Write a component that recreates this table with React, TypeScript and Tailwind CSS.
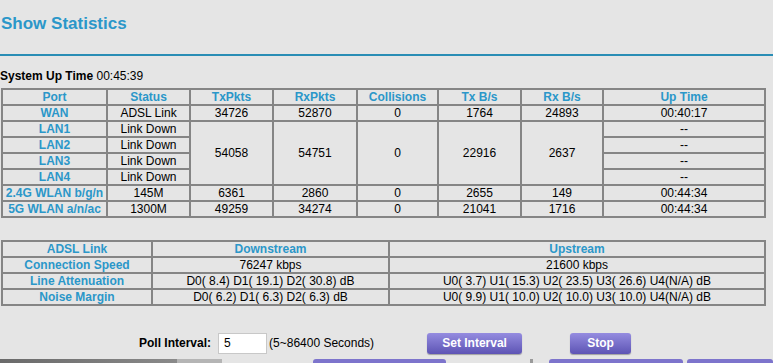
const blue = 'text-[#2b97c9]';
const cell = 'border-2 border-[#858585] p-0 h-[16px] leading-[12px] text-center';
const head = `${cell} ${blue} font-bold`;

const ports = [
  { port: 'WAN', status: 'ADSL Link', tx: '34726', rx: '52870', col: '0', txb: '1764', rxb: '24893', up: '00:40:17' },
];

function App() {
  return (
    <div className="min-h-[363px] w-[773px] overflow-hidden bg-[#e5e5e5] font-['Liberation_Sans',Arial,sans-serif] text-[12px] text-black">
      <h1 className={`pl-px pt-[14px] text-[17px] font-bold leading-[20px] ${blue}`}>Show Statistics</h1>
      <div className="mt-[20px] h-[2px] w-full bg-[#2a8db5]" />
      <p className="mt-[13px] leading-[14px]">
        <b>System Up Time</b> 00:45:39
      </p>

      <table className="mt-[5px] ml-px w-[765px] table-fixed border-collapse border-2 border-[#858585]">
        <colgroup>
          <col className="w-[105px]" />
          <col className="w-[83px]" />
          <col className="w-[83px]" />
          <col className="w-[84px]" />
          <col className="w-[81px]" />
          <col className="w-[83px]" />
          <col className="w-[82px]" />
          <col />
        </colgroup>
        <tbody>
          <tr>
            {['Port', 'Status', 'TxPkts', 'RxPkts', 'Collisions', 'Tx B/s', 'Rx B/s', 'Up Time'].map((h) => (
              <td key={h} className={head}>{h}</td>
            ))}
          </tr>
          {ports.map((r) => (
            <tr key={r.port}>
              <td className={head}>{r.port}</td>
              <td className={cell}>{r.status}</td>
              <td className={cell}>{r.tx}</td>
              <td className={cell}>{r.rx}</td>
              <td className={cell}>{r.col}</td>
              <td className={cell}>{r.txb}</td>
              <td className={cell}>{r.rxb}</td>
              <td className={cell}>{r.up}</td>
            </tr>
          ))}
          {['LAN1', 'LAN2', 'LAN3', 'LAN4'].map((lan, i) => (
            <tr key={lan}>
              <td className={head}>{lan}</td>
              <td className={cell}>Link Down</td>
              {i === 0 && (
                <>
                  <td rowSpan={4} className={cell}>54058</td>
                  <td rowSpan={4} className={cell}>54751</td>
                  <td rowSpan={4} className={cell}>0</td>
                  <td rowSpan={4} className={cell}>22916</td>
                  <td rowSpan={4} className={cell}>2637</td>
                </>
              )}
              <td className={cell}>--</td>
            </tr>
          ))}
          <tr>
            <td className={head}>2.4G WLAN b/g/n</td>
            <td className={cell}>145M</td>
            <td className={cell}>6361</td>
            <td className={cell}>2860</td>
            <td className={cell}>0</td>
            <td className={cell}>2655</td>
            <td className={cell}>149</td>
            <td className={cell}>00:44:34</td>
          </tr>
          <tr>
            <td className={head}>5G WLAN a/n/ac</td>
            <td className={cell}>1300M</td>
            <td className={cell}>49259</td>
            <td className={cell}>34274</td>
            <td className={cell}>0</td>
            <td className={cell}>21041</td>
            <td className={cell}>1716</td>
            <td className={cell}>00:44:34</td>
          </tr>
        </tbody>
      </table>

      <table className="mt-[22px] ml-px w-[765px] table-fixed border-collapse border-2 border-[#858585]">
        <colgroup>
          <col className="w-[150px]" />
          <col className="w-[237px]" />
          <col />
        </colgroup>
        <tbody>
          <tr>
            <td className={head}>ADSL Link</td>
            <td className={head}>Downstream</td>
            <td className={head}>Upstream</td>
          </tr>
          <tr>
            <td className={head}>Connection Speed</td>
            <td className={cell}>76247 kbps</td>
            <td className={cell}>21600 kbps</td>
          </tr>
          <tr>
            <td className={head}>Line Attenuation</td>
            <td className={cell}>D0( 8.4) D1( 19.1) D2( 30.8) dB</td>
            <td className={cell}>U0( 3.7) U1( 15.3) U2( 23.5) U3( 26.6) U4(N/A) dB</td>
          </tr>
          <tr>
            <td className={head}>Noise Margin</td>
            <td className={cell}>D0( 6.2) D1( 6.3) D2( 6.3) dB</td>
            <td className={cell}>U0( 9.9) U1( 10.0) U2( 10.0) U3( 10.0) U4(N/A) dB</td>
          </tr>
        </tbody>
      </table>

      <div className="mt-[26px] flex h-[22px] items-center pl-[139px]">
        <span className="font-bold">Poll Interval:</span>
        <input
          defaultValue="5"
          className="ml-[7px] h-[21px] w-[49px] border border-[#c8c8c8] bg-white px-[5px] text-[12px] outline-none"
        />
        <span className="ml-[2px]">(5~86400 Seconds)</span>
        <button className="ml-[53px] h-[21px] w-[95px] rounded-[3px] bg-gradient-to-b from-[#958ce0] to-[#5e54b4] text-[12px] font-bold text-white shadow-[0_1px_1px_rgba(0,0,0,0.3)]">
          Set Interval
        </button>
        <button className="ml-[48px] h-[21px] w-[61px] rounded-[3px] bg-gradient-to-b from-[#958ce0] to-[#5e54b4] text-[12px] font-bold text-white shadow-[0_1px_1px_rgba(0,0,0,0.3)]">
          Stop
        </button>
      </div>

      <div className="mt-[5px] flex h-[4px]">
        <div className="w-[177px] bg-gradient-to-r from-[#6a6a6a] to-[#8a8a8a]" />
        <div className="w-[45px] bg-[#b5b5b5]" />
        <div className="ml-[91px] w-[133px] rounded-t-[3px] bg-[#7d74cc]" />
        <div className="ml-[84px] w-[3px] bg-[#9a9a9a]" />
        <div className="ml-[16px] w-[134px] rounded-t-[3px] bg-[#7d74cc]" />
        <div className="ml-[4px] flex-1 rounded-t-[3px] bg-[#7d74cc]" />
      </div>
    </div>
  );
}

export default App;
